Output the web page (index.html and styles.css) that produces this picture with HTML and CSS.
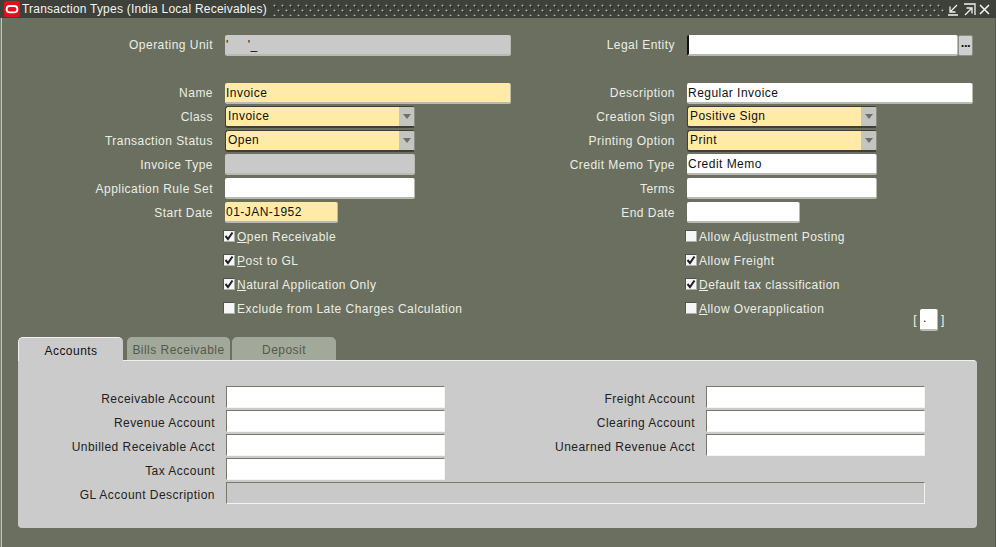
FILE: index.html
```html
<!DOCTYPE html>
<html lang="en">
<head>
<meta charset="utf-8">
<title>Transaction Types (India Local Receivables)</title>
<link rel="stylesheet" href="styles.css">
</head>
<body>
<div class="window">
  <header class="titlebar">
    <svg class="logo" width="18" height="16" viewBox="0 0 18 16"><rect x="1" y="0" width="16" height="16" rx="2" fill="#e2101a"/><rect x="3.6" y="5" width="10.8" height="6.4" rx="3.2" fill="none" stroke="#fff" stroke-width="1.8"/></svg>
    <span class="title">Transaction Types (India Local Receivables)</span>
    <span class="stipple"></span>
    <span class="controls">
      <svg width="13" height="13" viewBox="0 0 13 13"><path d="M1 12H11M10 2L4 8M3 3.5V9H8.5" fill="none" stroke="#f2f2f2" stroke-width="1.3"/></svg>
      <svg width="13" height="13" viewBox="0 0 13 13"><path d="M1 1H12V12M2 12L8 6M3.5 5H9V10.5" fill="none" stroke="#f2f2f2" stroke-width="1.3"/></svg>
      <svg width="11" height="11" viewBox="0 0 11 11"><path d="M1 1L10 10M10 1L1 10" fill="none" stroke="#f2f2f2" stroke-width="1.6"/></svg>
    </span>
  </header>

  <main class="form">
    <section class="column">
      <div class="row tall"><label class="label">Operating Unit</label><div class="field readonly w-wide redacted">'     '_</div></div>
      <div class="row"></div>
      <div class="row tall"><label class="label">Name</label><div class="field required w-wide">Invoice</div></div>
      <div class="row"><label class="label">Class</label><div class="select w-mid"><span class="select-text">Invoice</span><span class="arrow"></span></div></div>
      <div class="row"><label class="label">Transaction Status</label><div class="select w-mid"><span class="select-text">Open</span><span class="arrow"></span></div></div>
      <div class="row"><label class="label">Invoice Type</label><div class="field readonly w-mid"></div></div>
      <div class="row"><label class="label">Application Rule Set</label><div class="field w-mid"></div></div>
      <div class="row"><label class="label">Start Date</label><div class="field required w-date">01-JAN-1952</div></div>
      <div class="row check-row"><span class="check on"><svg width="10" height="10" viewBox="0 0 10 10"><path d="M1.5 5L4 8L8.5 1.5" fill="none" stroke="#222" stroke-width="2"/></svg></span><span class="check-label"><u>O</u>pen Receivable</span></div>
      <div class="row check-row"><span class="check on"><svg width="10" height="10" viewBox="0 0 10 10"><path d="M1.5 5L4 8L8.5 1.5" fill="none" stroke="#222" stroke-width="2"/></svg></span><span class="check-label"><u>P</u>ost to GL</span></div>
      <div class="row check-row"><span class="check on"><svg width="10" height="10" viewBox="0 0 10 10"><path d="M1.5 5L4 8L8.5 1.5" fill="none" stroke="#222" stroke-width="2"/></svg></span><span class="check-label"><u>N</u>atural Application Only</span></div>
      <div class="row check-row"><span class="check"></span><span class="check-label">Exclude from Late Charges Calculation</span></div>
    </section>

    <section class="column">
      <div class="row tall"><label class="label">Legal Entity</label><div class="field w-entity caret"></div><span class="lov">...</span></div>
      <div class="row"></div>
      <div class="row tall"><label class="label">Description</label><div class="field w-desc">Regular Invoice</div></div>
      <div class="row"><label class="label">Creation Sign</label><div class="select w-mid"><span class="select-text">Positive Sign</span><span class="arrow"></span></div></div>
      <div class="row"><label class="label">Printing Option</label><div class="select w-mid"><span class="select-text">Print</span><span class="arrow"></span></div></div>
      <div class="row"><label class="label">Credit Memo Type</label><div class="field w-mid">Credit Memo</div></div>
      <div class="row"><label class="label">Terms</label><div class="field w-mid"></div></div>
      <div class="row"><label class="label">End Date</label><div class="field w-date"></div></div>
      <div class="row check-row"><span class="check"></span><span class="check-label">Allow Adjustment Posting</span></div>
      <div class="row check-row"><span class="check on"><svg width="10" height="10" viewBox="0 0 10 10"><path d="M1.5 5L4 8L8.5 1.5" fill="none" stroke="#222" stroke-width="2"/></svg></span><span class="check-label">Allow Freight</span></div>
      <div class="row check-row"><span class="check on"><svg width="10" height="10" viewBox="0 0 10 10"><path d="M1.5 5L4 8L8.5 1.5" fill="none" stroke="#222" stroke-width="2"/></svg></span><span class="check-label"><u>D</u>efault tax classification</span></div>
      <div class="row check-row"><span class="check"></span><span class="check-label"><u>A</u>llow Overapplication</span>
        <span class="bracket"><span class="bracket-mark">[</span><span class="bracket-box">.</span><span class="bracket-mark">]</span></span>
      </div>
    </section>
  </main>

  <nav class="tabs">
    <span class="tab active">Accounts</span>
    <span class="tab bills">Bills Receivable</span>
    <span class="tab deposit">Deposit</span>
  </nav>

  <section class="panel">
    <div class="acct"><label class="acct-label">Receivable Account</label><div class="acct-field"></div></div>
    <div class="acct"><label class="acct-label">Freight Account</label><div class="acct-field"></div></div>
    <div class="acct"><label class="acct-label">Revenue Account</label><div class="acct-field"></div></div>
    <div class="acct"><label class="acct-label">Clearing Account</label><div class="acct-field"></div></div>
    <div class="acct"><label class="acct-label">Unbilled Receivable Acct</label><div class="acct-field"></div></div>
    <div class="acct"><label class="acct-label">Unearned Revenue Acct</label><div class="acct-field"></div></div>
    <div class="acct"><label class="acct-label">Tax Account</label><div class="acct-field"></div></div>
    <div class="acct empty"></div>
    <div class="acct full"><label class="acct-label">GL Account Description</label><div class="acct-field gl"></div></div>
  </section>
</div>
</body>
</html>
```
FILE: styles.css
```css
* { box-sizing: border-box; }
html, body { margin: 0; padding: 0; }
body {
  width: 996px;
  height: 547px;
  overflow: hidden;
  background: #6a6f5f;
  font-family: "Liberation Sans", Arial, sans-serif;
  font-size: 12px;
  letter-spacing: 0.47px;
  color: #111;
}
.window {
  width: 996px;
  height: 547px;
  box-shadow: inset 1px 0 #7d8174, inset 2px 0 #c4c6bd, inset -1px 0 #55594c;
}
.titlebar {
  height: 18px;
  background: #3d4139;
  display: flex;
  align-items: center;
  color: #f4f4f4;
  padding-left: 3px;
}
.logo { flex: none; }
.title {
  margin-left: 1px;
  white-space: nowrap;
  width: 251px;
  flex: none;
  letter-spacing: 0.22px;
}
.stipple {
  width: 672px;
  height: 14px;
  flex: none;
  background-color: #3d4139;
  background-image:
    radial-gradient(circle at 1.5px 3.5px, #a9a99d 0.9px, transparent 1.1px),
    radial-gradient(circle at 5.5px 8.5px, #a9a99d 0.9px, transparent 1.1px),
    radial-gradient(circle at 2.5px 4.5px, #1f211a 0.9px, transparent 1.1px),
    radial-gradient(circle at 6.5px 9.5px, #1f211a 0.9px, transparent 1.1px);
  background-size: 8px 10px;
}
.controls {
  display: flex;
  align-items: center;
  gap: 3px;
  margin-left: 2px;
}
.controls svg { display: block; }
.form {
  display: flex;
  padding-top: 15px;
}
.column { width: 462px; flex: none; }
.column + .column { width: 534px; }
.row {
  height: 24px;
  display: flex;
  align-items: flex-start;
  padding-top: 1px;
}
.row.tall { padding-top: 2px; }
.label {
  width: 213px;
  margin-right: 12px;
  flex: none;
  text-align: right;
  color: #eceee6;
  line-height: 22px;
  white-space: nowrap;
}
.row.tall .label { line-height: 21px; }
.field {
  height: 21px;
  flex: none;
  line-height: 20px;
  padding-left: 1px;
  background: #fff;
  border-radius: 2px;
  border-bottom: 2px solid #b9bbb0;
  border-right: 1px solid #b9bbb0;
  white-space: nowrap;
}
.required { background: #ffeaa8; }
.readonly { background: #c9c9c9; }
.redacted { white-space: pre; }
.caret { border-left: 2px solid #111; }
.w-wide { width: 286px; }
.w-mid { width: 190px; }
.w-date { width: 113px; }
.w-entity { width: 271px; }
.w-desc { width: 286px; }
.lov {
  width: 15px;
  height: 21px;
  flex: none;
  background: #cfcfcf;
  border: 1px solid #8d8f84;
  border-radius: 2px;
  text-align: center;
  font-weight: bold;
  line-height: 13px;
  font-size: 13px;
  letter-spacing: -0.5px;
}
.select {
  height: 22px;
  flex: none;
  display: flex;
  background: #ffeaa8;
  border: 1px solid #3c4037;
  border-right-color: #8c8e84;
  border-bottom: 2px solid #3c4037;
  border-radius: 3px;
  overflow: hidden;
}
.select-text { flex: 1; padding-left: 2px; line-height: 19px; }
.arrow {
  width: 15px;
  background: #c4c4c0;
}
.arrow::after {
  content: "";
  display: block;
  margin: 7px auto 0;
  width: 0;
  height: 0;
  border-left: 4px solid transparent;
  border-right: 4px solid transparent;
  border-top: 5px solid #6e7068;
}
.check-row {
  padding-top: 0;
  padding-left: 224px;
  align-items: center;
  color: #eceee6;
}
.check {
  width: 11px;
  height: 11px;
  margin-top: -2px;
  background: #f6f6f6;
  border-right: 1px solid #b0b0a6;
  border-bottom: 1px solid #b0b0a6;
  box-shadow: -1px -1px 0 #50534a;
  display: flex;
  flex: none;
}
.check svg { display: block; }
.check-label { margin-left: 2px; white-space: nowrap; }
.bracket {
  display: flex;
  align-items: center;
  height: 22px;
  margin-left: 92px;
  margin-top: 24px;
  color: #f2f2f2;
  position: relative;
  left: -3px;
  top: -1px;
}
.bracket-mark { font-size: 12px; }
.bracket-box {
  width: 18px;
  height: 22px;
  margin: 0 3px;
  background: #fff;
  border-right: 1px solid #b9bbb0;
  border-bottom: 2px solid #b9bbb0;
  border-radius: 2px;
  color: #111;
  line-height: 19px;
  padding-left: 3px;
}
.tabs {
  display: flex;
  align-items: flex-end;
  height: 24px;
  margin-top: 15px;
  padding-left: 18px;
}
.tab {
  height: 23px;
  text-align: center;
  line-height: 26px;
  background: #a3a99a;
  color: #55594c;
  border-radius: 5px 5px 0 0;
  white-space: nowrap;
}
.tab.active {
  width: 105px;
  height: 24px;
  background: #cbcbcb;
  color: #111;
  border-top: 1px solid #f0f0f0;
  border-left: 1px solid #f0f0f0;
  line-height: 27px;
  position: relative;
  z-index: 1;
  margin-bottom: -1px;
}
.tab.bills { width: 103px; margin-left: 4px; }
.tab.deposit { width: 104px; margin-left: 2px; }
.panel {
  width: 959px;
  height: 168px;
  margin-left: 18px;
  padding-top: 25px;
  background: #cbcbcb;
  border-top: 1px solid #f0f0f0;
  border-radius: 0 4px 4px 4px;
  display: grid;
  grid-template-columns: 462px 497px;
  grid-auto-rows: 24px;
}
.acct { display: flex; align-items: flex-start; }
.acct.full { grid-column: 1 / -1; }
.acct-label {
  width: 197px;
  margin-right: 11px;
  flex: none;
  text-align: right;
  color: #222;
  line-height: 26px;
  white-space: nowrap;
}
.acct:nth-child(even) .acct-label { width: 215px; }
.acct-field {
  width: 219px;
  height: 22px;
  flex: none;
  background: #fff;
  border-top: 1px solid #76796c;
  border-left: 1px solid #76796c;
  border-bottom: 1px solid #f4f4f4;
  border-right: 1px solid #f4f4f4;
}
.acct-field.gl {
  width: 699px;
  background: #c9c9c9;
}
```
